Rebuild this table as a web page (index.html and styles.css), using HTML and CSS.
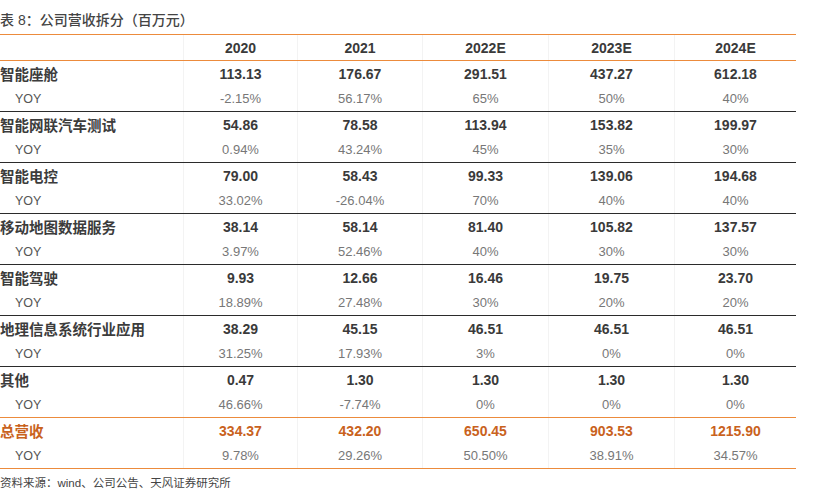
FILE: index.html
```html
<!DOCTYPE html>
<html lang="zh-CN">
<head>
<meta charset="utf-8">
<title>表 8：公司营收拆分</title>
<link rel="stylesheet" href="styles.css">
</head>
<body>
<div class="page">
  <div class="title">表 8：公司营收拆分（百万元）</div>
  <div class="table">
    <div class="row head">
      <div class="c lbl"></div>
      <div class="c">2020</div>
      <div class="c">2021</div>
      <div class="c">2022E</div>
      <div class="c">2023E</div>
      <div class="c">2024E</div>
    </div>

    <div class="group">
      <div class="row main">
        <div class="c lbl">智能座舱</div>
        <div class="c">113.13</div><div class="c">176.67</div><div class="c">291.51</div><div class="c">437.27</div><div class="c">612.18</div>
      </div>
      <div class="row yoy">
        <div class="c lbl">YOY</div>
        <div class="c">-2.15%</div><div class="c">56.17%</div><div class="c">65%</div><div class="c">50%</div><div class="c">40%</div>
      </div>
    </div>

    <div class="group">
      <div class="row main">
        <div class="c lbl">智能网联汽车测试</div>
        <div class="c">54.86</div><div class="c">78.58</div><div class="c">113.94</div><div class="c">153.82</div><div class="c">199.97</div>
      </div>
      <div class="row yoy">
        <div class="c lbl">YOY</div>
        <div class="c">0.94%</div><div class="c">43.24%</div><div class="c">45%</div><div class="c">35%</div><div class="c">30%</div>
      </div>
    </div>

    <div class="group">
      <div class="row main">
        <div class="c lbl">智能电控</div>
        <div class="c">79.00</div><div class="c">58.43</div><div class="c">99.33</div><div class="c">139.06</div><div class="c">194.68</div>
      </div>
      <div class="row yoy">
        <div class="c lbl">YOY</div>
        <div class="c">33.02%</div><div class="c">-26.04%</div><div class="c">70%</div><div class="c">40%</div><div class="c">40%</div>
      </div>
    </div>

    <div class="group">
      <div class="row main">
        <div class="c lbl">移动地图数据服务</div>
        <div class="c">38.14</div><div class="c">58.14</div><div class="c">81.40</div><div class="c">105.82</div><div class="c">137.57</div>
      </div>
      <div class="row yoy">
        <div class="c lbl">YOY</div>
        <div class="c">3.97%</div><div class="c">52.46%</div><div class="c">40%</div><div class="c">30%</div><div class="c">30%</div>
      </div>
    </div>

    <div class="group">
      <div class="row main">
        <div class="c lbl">智能驾驶</div>
        <div class="c">9.93</div><div class="c">12.66</div><div class="c">16.46</div><div class="c">19.75</div><div class="c">23.70</div>
      </div>
      <div class="row yoy">
        <div class="c lbl">YOY</div>
        <div class="c">18.89%</div><div class="c">27.48%</div><div class="c">30%</div><div class="c">20%</div><div class="c">20%</div>
      </div>
    </div>

    <div class="group">
      <div class="row main">
        <div class="c lbl">地理信息系统行业应用</div>
        <div class="c">38.29</div><div class="c">45.15</div><div class="c">46.51</div><div class="c">46.51</div><div class="c">46.51</div>
      </div>
      <div class="row yoy">
        <div class="c lbl">YOY</div>
        <div class="c">31.25%</div><div class="c">17.93%</div><div class="c">3%</div><div class="c">0%</div><div class="c">0%</div>
      </div>
    </div>

    <div class="group orange-end">
      <div class="row main">
        <div class="c lbl">其他</div>
        <div class="c">0.47</div><div class="c">1.30</div><div class="c">1.30</div><div class="c">1.30</div><div class="c">1.30</div>
      </div>
      <div class="row yoy">
        <div class="c lbl">YOY</div>
        <div class="c">46.66%</div><div class="c">-7.74%</div><div class="c">0%</div><div class="c">0%</div><div class="c">0%</div>
      </div>
    </div>

    <div class="group total orange-end">
      <div class="row main">
        <div class="c lbl">总营收</div>
        <div class="c">334.37</div><div class="c">432.20</div><div class="c">650.45</div><div class="c">903.53</div><div class="c">1215.90</div>
      </div>
      <div class="row yoy">
        <div class="c lbl">YOY</div>
        <div class="c">9.78%</div><div class="c">29.26%</div><div class="c">50.50%</div><div class="c">38.91%</div><div class="c">34.57%</div>
      </div>
    </div>
  </div>
  <div class="source">资料来源：wind、公司公告、天风证券研究所</div>
</div>
</body>
</html>
```

FILE: styles.css
```css
html, body {
  margin: 0;
  padding: 0;
  background: #ffffff;
}

body {
  font-family: "Liberation Sans", Arial, "Noto Sans CJK SC", sans-serif;
  color: #333333;
}

.page {
  width: 827px;
}

.title {
  height: 34px;
  box-sizing: border-box;
  padding-top: 11px;
  font-size: 14px;
  line-height: 18px;
  font-weight: 500;
  color: #444444;
  font-family: "Liberation Sans", "Noto Sans CJK SC", sans-serif;
}

.table {
  width: 796px;
  border-top: 1px solid #ec8b3c;
}

.row {
  display: grid;
  grid-template-columns: 183px 114px 125px 126px 126px 122px;
  height: 25px;
  align-items: stretch;
}

.c {
  display: flex;
  align-items: center;
  justify-content: center;
  border-left: 1px solid #f3f3f3;
  white-space: nowrap;
}

.c.lbl {
  justify-content: flex-start;
  border-left: none;
}

.head {
  border-bottom: 1px solid #ec8b3c;
  font-size: 14px;
  font-weight: bold;
  color: #3a3a3a;
}

.group {
  border-bottom: 1px solid #2b2b2b;
}

.group.orange-end {
  border-bottom: 1px solid #ec8b3c;
}

.main {
  font-size: 14px;
  font-weight: bold;
  color: #3a3a3a;
}

.main .lbl {
  font-family: "Noto Sans CJK SC", sans-serif;
  font-size: 14.5px;
  font-weight: 700;
  color: #3c3c3c;
}

.yoy {
  font-size: 13px;
  color: #777777;
}

.yoy .lbl {
  padding-left: 15px;
  font-size: 12.5px;
  color: #555555;
}

.total .main,
.total .main .lbl {
  color: #c9621d;
}

.source {
  padding-top: 6px;
  font-size: 11.5px;
  line-height: 16px;
  color: #444444;
  font-family: "Liberation Sans", "Noto Sans CJK SC", sans-serif;
}
```
